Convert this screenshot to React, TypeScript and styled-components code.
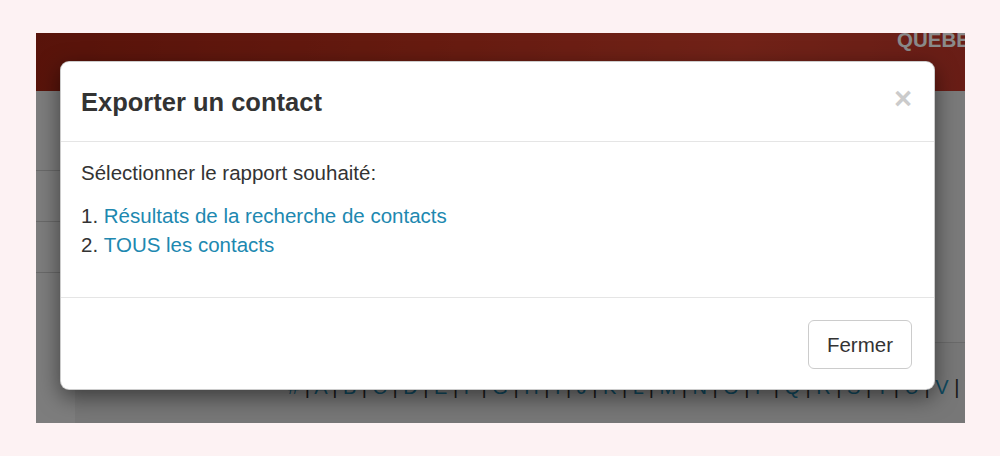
import styled, { createGlobalStyle } from 'styled-components';

const GlobalStyle = createGlobalStyle`
	html, body {
		margin: 0;
		padding: 0;
	}
	body {
		background: #fdf2f3;
		font-family: "Liberation Sans", Arial, Helvetica, sans-serif;
	}
`;

const letters = ['#', 'A', 'B', 'C', 'D', 'E', 'F', 'G', 'H', 'I', 'J', 'K', 'L', 'M', 'N', 'O', 'P', 'Q', 'R', 'S', 'T', 'U', 'V', 'W', 'X', 'Y', 'Z'];

const App = () => {
	return (
		<Page>
			<GlobalStyle />
			<Screen>
				<SiteHeader>
					<Region>QUEBEC</Region>
				</SiteHeader>
				<SiteBody>
					<Sidebar>
						<SideRow />
						<SideRow />
						<SideRow />
					</Sidebar>
					<Main>
						<MainTop />
						<AlphaBar>
							{letters.map((l, i) => (
								<span key={l}>
									<Letter>{l}</Letter>
									{i < letters.length - 1 && <Sep> | </Sep>}
								</span>
							))}
						</AlphaBar>
					</Main>
				</SiteBody>
				<Backdrop />
				<Modal>
					<ModalHeader>
						<Title>Exporter un contact</Title>
						<Close type="button">×</Close>
					</ModalHeader>
					<ModalBody>
						<Lead>Sélectionner le rapport souhaité:</Lead>
						<Reports>
							<li><ReportLink href="#">Résultats de la recherche de contacts</ReportLink></li>
							<li><ReportLink href="#">TOUS les contacts</ReportLink></li>
						</Reports>
					</ModalBody>
					<ModalFooter>
						<Button type="button">Fermer</Button>
					</ModalFooter>
				</Modal>
			</Screen>
		</Page>
	);
};

const Page = styled.div`
	width: 1000px;
	height: 456px;
	padding: 33px 35px 34px 36px;
	box-sizing: border-box;
`;

const Screen = styled.div`
	position: relative;
	width: 929px;
	height: 390px;
	overflow: hidden;
	display: flex;
	flex-direction: column;
	background: #e0e0e0;
`;

const SiteHeader = styled.div`
	height: 58px;
	flex-shrink: 0;
	padding-left: 861px;
	overflow: hidden;
	background: linear-gradient(100deg, #a32414 0%, #bd321e 40%, #d2402d 75%, #c2372a 100%);
`;

const Region = styled.div`
	margin-top: -4px;
	font-size: 20.5px;
	line-height: 22px;
	font-weight: 700;
	color: #fff;
	white-space: nowrap;
`;

const SiteBody = styled.div`
	flex: 1;
	display: grid;
	grid-template-columns: 39px 1fr;
`;

const Sidebar = styled.div`
	background: #e8e8e8;
	padding-top: 29px;
`;

const SideRow = styled.div`
	height: 50px;
	border-bottom: 1px solid #c2c2c2;
`;

const Main = styled.div`
	display: flex;
	flex-direction: column;
	background: #dcdcdc;
`;

const MainTop = styled.div`
	height: 251px;
	border-bottom: 1px solid #c4c4c4;
	background: #e2e2e2;
`;

const AlphaBar = styled.div`
	padding: 30px 0 0 213px;
	font-size: 20px;
	line-height: 29px;
	white-space: nowrap;
`;

const Letter = styled.span`
	color: #2088b0;
`;

const Sep = styled.span`
	color: #333;
	white-space: pre;
`;

const Backdrop = styled.div`
	position: absolute;
	inset: 0;
	background: rgba(0, 0, 0, 0.46);
`;

const Modal = styled.div`
	position: absolute;
	left: 24px;
	top: 28px;
	width: 875px;
	box-sizing: border-box;
	background: #fff;
	border: 1px solid rgba(0, 0, 0, 0.2);
	border-radius: 9px;
	box-shadow: 0 7px 22px rgba(0, 0, 0, 0.5);
	color: #333;
`;

const ModalHeader = styled.div`
	display: flex;
	justify-content: space-between;
	align-items: flex-start;
	padding: 26px 22px 25px 20px;
	border-bottom: 1px solid #e5e5e5;
`;

const Title = styled.h4`
	margin: 0;
	font-size: 25.5px;
	line-height: 28px;
	font-weight: 700;
	color: #333;
`;

const Close = styled.button`
	margin-top: -5px;
	padding: 0;
	border: 0;
	background: none;
	font-family: inherit;
	font-size: 31px;
	line-height: 1;
	font-weight: 700;
	color: #000;
	opacity: 0.2;
	text-shadow: 0 1px 0 #fff;
	cursor: pointer;
`;

const ModalBody = styled.div`
	padding: 16px 22px 24px 20px;
	font-size: 20.5px;
	line-height: 29.3px;
`;

const Lead = styled.p`
	margin: 0 0 13.5px;
`;

const Reports = styled.ol`
	margin: 0 0 14px;
	padding: 0;
	list-style: decimal inside;
`;

const ReportLink = styled.a`
	color: #2088b0;
	text-decoration: none;
`;

const ModalFooter = styled.div`
	display: flex;
	justify-content: flex-end;
	padding: 22px 22px 20px;
	border-top: 1px solid #e5e5e5;
`;

const Button = styled.button`
	padding: 9px 18px;
	font-family: inherit;
	font-size: 20.5px;
	line-height: 29px;
	color: #333;
	background: #fff;
	border: 1px solid #ccc;
	border-radius: 6px;
	cursor: pointer;
`;

export default App;
